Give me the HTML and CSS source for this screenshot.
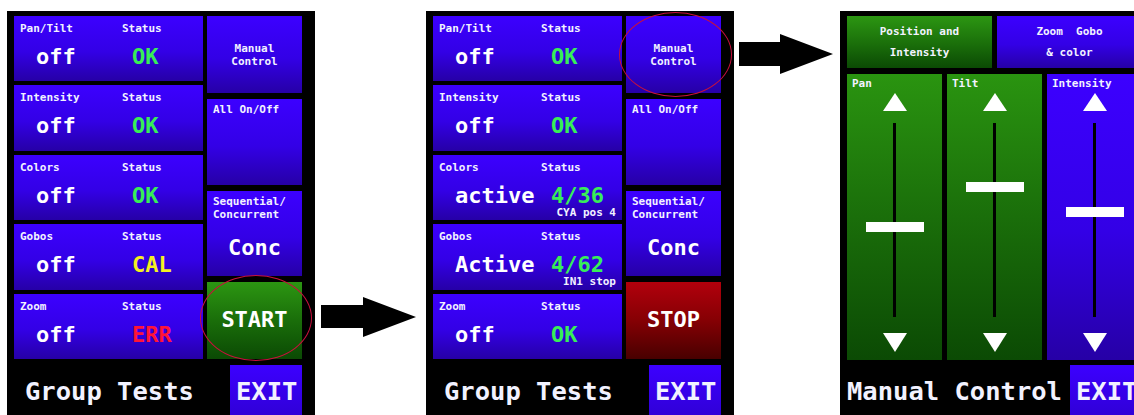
FILE: index.html
```html
<!DOCTYPE html>
<html lang="en">
<head>
    <meta charset="UTF-8">
    <meta name="viewport" content="width=device-width, initial-scale=1.0">
    <title>Group Tests - Manual Control</title>
    <link rel="stylesheet" href="styles.css">
</head>
<body>
    <div class="page">

        <!-- screen 1: group tests, idle -->
        <div class="screen">
            <div class="grid">
                <div class="channels">
                    <div class="tile">
                        <span class="label">Pan/Tilt</span><span class="label">Status</span>
                        <span class="value">off</span><span class="value state ok">OK</span>
                    </div>
                    <div class="tile">
                        <span class="label">Intensity</span><span class="label">Status</span>
                        <span class="value">off</span><span class="value state ok">OK</span>
                    </div>
                    <div class="tile">
                        <span class="label">Colors</span><span class="label">Status</span>
                        <span class="value">off</span><span class="value state ok">OK</span>
                    </div>
                    <div class="tile">
                        <span class="label">Gobos</span><span class="label">Status</span>
                        <span class="value">off</span><span class="value state cal">CAL</span>
                    </div>
                    <div class="tile">
                        <span class="label">Zoom</span><span class="label">Status</span>
                        <span class="value">off</span><span class="value state err">ERR</span>
                    </div>
                </div>
                <div class="actions">
                    <div class="btn centered"><span class="label">Manual<br>Control</span></div>
                    <div class="btn"><span class="label">All On/Off</span></div>
                    <div class="btn mode">
                        <span class="label">Sequential/<br>Concurrent</span>
                        <span class="value">Conc</span>
                    </div>
                    <div class="btn centered go"><span class="value">START</span></div>
                </div>
            </div>
            <div class="footer">
                <span class="title">Group Tests</span>
                <div class="exit">EXIT</div>
            </div>
            <div class="ring ring-start"></div>
        </div>

        <svg class="arrow arrow-low" width="95" height="40" viewBox="0 0 95 40">
            <polygon points="0,8 42,8 42,0 95,20 42,40 42,31 0,31" fill="#000"/>
        </svg>

        <!-- screen 2: group tests, running -->
        <div class="screen">
            <div class="grid">
                <div class="channels">
                    <div class="tile">
                        <span class="label">Pan/Tilt</span><span class="label">Status</span>
                        <span class="value">off</span><span class="value state ok">OK</span>
                    </div>
                    <div class="tile">
                        <span class="label">Intensity</span><span class="label">Status</span>
                        <span class="value">off</span><span class="value state ok">OK</span>
                    </div>
                    <div class="tile">
                        <span class="label">Colors</span><span class="label">Status</span>
                        <span class="value">active</span><span class="value state ok">4/36</span>
                        <span class="sub">CYA pos 4</span>
                    </div>
                    <div class="tile">
                        <span class="label">Gobos</span><span class="label">Status</span>
                        <span class="value">Active</span><span class="value state ok">4/62</span>
                        <span class="sub">IN1 stop</span>
                    </div>
                    <div class="tile">
                        <span class="label">Zoom</span><span class="label">Status</span>
                        <span class="value">off</span><span class="value state ok">OK</span>
                    </div>
                </div>
                <div class="actions">
                    <div class="btn centered"><span class="label">Manual<br>Control</span></div>
                    <div class="btn"><span class="label">All On/Off</span></div>
                    <div class="btn mode">
                        <span class="label">Sequential/<br>Concurrent</span>
                        <span class="value">Conc</span>
                    </div>
                    <div class="btn centered stop"><span class="value">STOP</span></div>
                </div>
            </div>
            <div class="footer">
                <span class="title">Group Tests</span>
                <div class="exit">EXIT</div>
            </div>
            <div class="ring ring-manual"></div>
        </div>

        <svg class="arrow arrow-high" width="94" height="40" viewBox="0 0 94 40">
            <polygon points="0,8 41,8 41,0 94,20 41,40 41,32 0,32" fill="#000"/>
        </svg>

        <!-- screen 3: manual control -->
        <div class="screen manual">
            <div class="tabs">
                <div class="tab active">Position and<br>Intensity</div>
                <div class="tab">Zoom  Gobo<br>&amp; color</div>
            </div>
            <div class="faders">
                <div class="fader green">
                    <span class="label">Pan</span>
                    <span class="tri up"></span>
                    <div class="track"><span class="knob" style="top: 99px"></span></div>
                    <span class="tri down"></span>
                </div>
                <div class="fader green">
                    <span class="label">Tilt</span>
                    <span class="tri up"></span>
                    <div class="track"><span class="knob" style="top: 59px"></span></div>
                    <span class="tri down"></span>
                </div>
                <div class="fader">
                    <span class="label">Intensity</span>
                    <span class="tri up"></span>
                    <div class="track"><span class="knob" style="top: 84px"></span></div>
                    <span class="tri down"></span>
                </div>
            </div>
            <div class="footer">
                <span class="title">Manual Control</span>
                <div class="exit">EXIT</div>
            </div>
        </div>

    </div>
</body>
</html>
```

FILE: styles.css
```css
body {
    margin: 0;
    padding: 0;
    height: 415px;
    overflow: hidden;
    background-color: #fff;
    font-family: "DejaVu Sans Mono", monospace;
    font-weight: bold;
    color: #f2f2ff;
}
.page {
    display: flex;
    align-items: flex-start;
    padding: 11px 0 0 7px;
}
.screen {
    position: relative;
    flex-shrink: 0;
    width: 308px;
    height: 420px;
    box-sizing: border-box;
    padding: 5px 13px 0 7px;
    background: #000;
}
.arrow {
    flex-shrink: 0;
    display: block;
}
.arrow-low {
    margin: 286px 10px 0 6px;
}
.arrow-high {
    margin: 23px 7px 0 5px;
}

/* status tiles */
.grid {
    display: flex;
    gap: 4px;
    height: 343px;
}
.channels {
    display: flex;
    flex-direction: column;
    gap: 4px;
    width: 189px;
}
.tile {
    flex: 1;
    display: grid;
    grid-template-columns: 102px 1fr;
    grid-template-rows: 13px 26px;
    row-gap: 9px;
    padding: 6px 6px 0 6px;
    background: linear-gradient(#3c00ff, #3300e6 55%, #2600a6);
    overflow: hidden;
}
.label {
    font-size: 11px;
    line-height: 13px;
}
.value {
    font-size: 22px;
    line-height: 26px;
    color: #fff;
    white-space: nowrap;
}
.tile .value {
    padding-left: 16px;
}
.tile .state {
    padding-left: 10px;
}
.ok { color: #38ee58; }
.cal { color: #f4f020; }
.err { color: #ff1438; }
.sub {
    grid-column: 1 / -1;
    text-align: right;
    font-size: 11px;
    line-height: 13px;
    margin-top: -12px;
}

/* right column buttons */
.actions {
    display: flex;
    flex-direction: column;
    gap: 6px;
    width: 95px;
}
.btn {
    flex: 1;
    display: flex;
    flex-direction: column;
    padding: 4px 6px;
    background: linear-gradient(#3c00ff, #3300e6 55%, #2600a6);
}
.btn.centered {
    align-items: center;
    justify-content: center;
    text-align: center;
    padding: 0;
}
.mode .value {
    margin-top: 14px;
    text-align: center;
}
.go {
    background: linear-gradient(#2c9612, #1a6e0a 50%, #0b4a04);
}
.stop {
    background: linear-gradient(#b2000c, #850004 50%, #480000);
}

/* bottom bar */
.footer {
    display: flex;
    justify-content: space-between;
    margin-top: 6px;
}
.title {
    padding: 11px 0 0 11px;
    font-size: 25.5px;
    line-height: 30px;
}
.exit {
    width: 72px;
    height: 60px;
    box-sizing: border-box;
    padding: 11px 0 0 6px;
    font-size: 25.5px;
    line-height: 30px;
    background: linear-gradient(#3c00ff, #2e00d0);
}
.ring {
    position: absolute;
    border: 1px solid #c8103c;
    border-radius: 50%;
}
.ring-start {
    left: 193px;
    top: 264px;
    width: 110px;
    height: 84px;
}
.ring-manual {
    left: 193px;
    top: 1px;
    width: 111px;
    height: 83px;
}

/* manual control screen */
.manual {
    padding: 5px 6px 0 7px;
}
.tabs {
    display: flex;
    gap: 5px;
    height: 52px;
}
.tab {
    flex: 1;
    display: flex;
    align-items: center;
    justify-content: center;
    text-align: center;
    white-space: pre;
    font-size: 11px;
    line-height: 21px;
    background: linear-gradient(#3c00ff, #3300e6 55%, #2600a6);
}
.tab.active {
    background: linear-gradient(#2c9612, #1a6e0a 55%, #0b4a04);
}
.faders {
    display: flex;
    gap: 5px;
    height: 286px;
    margin-top: 6px;
}
.fader {
    flex: 1;
    display: flex;
    flex-direction: column;
    align-items: center;
    padding-top: 3px;
    background: linear-gradient(#3c00ff, #3300e6 55%, #2600a6);
}
.fader.green {
    background: linear-gradient(#2a9410, #1a6e0a 50%, #0b4a04);
}
.fader .label {
    align-self: flex-start;
    padding-left: 5px;
}
.tri {
    width: 0;
    height: 0;
    border-left: 12.5px solid transparent;
    border-right: 12.5px solid transparent;
}
.tri.up {
    margin-top: 3px;
    border-bottom: 18px solid #fff;
}
.tri.down {
    margin-top: 16px;
    border-top: 19px solid #fff;
}
.track {
    position: relative;
    width: 3px;
    height: 194px;
    margin-top: 12px;
    background: #000;
}
.knob {
    position: absolute;
    left: 50%;
    width: 58px;
    height: 10px;
    transform: translateX(-50%);
    background: #fff;
}
.manual .footer {
    margin-top: 5px;
}
.manual .title {
    padding-left: 0;
}
```
